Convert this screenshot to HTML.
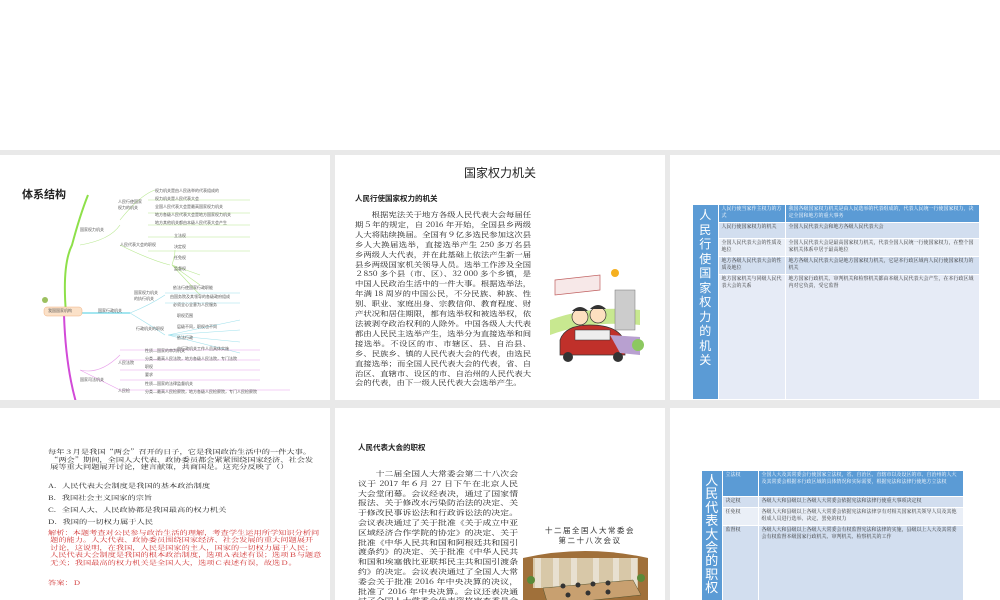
<!DOCTYPE html>
<html><head><meta charset="utf-8"><style>
*{margin:0;padding:0;box-sizing:border-box}
body{width:1000px;height:600px;background:#fff;position:relative;overflow:hidden;font-family:"Liberation Serif","Noto Serif CJK SC",serif;color:#222}
#bg{position:absolute;left:0;top:150px;width:1000px;height:450px;background:#e9e9e9}
.s{position:absolute;background:#fff;overflow:hidden}
.abs{position:absolute}
.sans{font-family:"Liberation Sans","Noto Sans CJK SC",sans-serif}
.sx{transform-origin:0 0;font-family:"Noto Serif CJK SC",serif}
.mm{font-family:"Liberation Sans","Noto Sans CJK SC",sans-serif;font-size:4px;color:#555;position:absolute;white-space:nowrap}
table{border-collapse:collapse;position:absolute;font-size:5px;line-height:6.5px;color:#333}
td{vertical-align:top;padding:2px 3px;border-right:1px solid #fff;border-bottom:1px solid #fff}
.v{background:#5b9bd5;color:#fff;font-family:"Liberation Sans","Noto Sans CJK SC",sans-serif;text-align:center}
</style></head><body>
<div id="bg"></div>

<!-- slide 1 mindmap -->
<div class="s" style="left:0;top:155px;width:330px;height:245px">
<div class="abs sans" style="left:22px;top:31px;font-size:11px;font-weight:bold">体系结构</div>
<svg class="abs" style="left:0;top:0" width="330" height="245">
<path d="M66 158 Q62 110 72 90 Q80 60 88 40" stroke="#8ee04a" stroke-width="2" fill="none"/>
<path d="M64 160 Q66 220 80 260" stroke="#d24ad8" stroke-width="2" fill="none"/>
<path d="M82 158 L130 158" stroke="#6cd6e8" stroke-width="1.2" fill="none"/>
<g stroke="#b8e890" fill="none" stroke-width=".6"><path d="M80 90 Q110 85 120 70"/><path d="M120 65 Q140 40 155 35M148 45 L250 45M148 58 L250 58M148 70 L250 70M148 82 L250 82M148 96 L250 96"/><path d="M120 90 Q150 105 170 110M172 110 Q175 100 175 95M172 110L200 120M172 110L200 130M172 110L200 140"/></g>
<g stroke="#9ee0ec" fill="none" stroke-width=".6"><path d="M130 158 Q150 150 165 140M130 158 Q150 170 165 180M165 138 L240 138M165 148 L240 148M168 180 L240 165M168 180L240 175M168 180L240 187M168 180L240 198"/></g>
<g stroke="#e8a0ea" fill="none" stroke-width=".6"><path d="M80 215 Q100 220 120 200M120 195 L260 195M120 205 L260 205M120 215 L260 215M120 225 L260 225M80 215 Q100 225 120 235M120 235L290 235"/></g>
<rect x="44" y="152" width="38" height="9" rx="3" fill="#fbe1c8" stroke="#f0b080" stroke-width=".5"/>
<circle cx="45" cy="145" r="3" fill="#9cc060"/>
</svg>
<div class="mm" style="left:48px;top:153px">我国国家机构</div>
<div class="mm" style="left:80px;top:72px">国家权力机关</div>
<div class="mm" style="left:118px;top:44px">人民行使国家<br>权力的机关</div>
<div class="mm" style="left:155px;top:33px">权力机关是由人民选举的代表组成的</div>
<div class="mm" style="left:155px;top:41px">权力机关是人民代表大会</div>
<div class="mm" style="left:155px;top:49px">全国人民代表大会是最高国家权力机关</div>
<div class="mm" style="left:155px;top:57px">地方各级人民代表大会是地方国家权力机关</div>
<div class="mm" style="left:155px;top:65px">地方其他机关都由本级人民代表大会产生</div>
<div class="mm" style="left:120px;top:87px">人民代表大会的职权</div>
<div class="mm" style="left:174px;top:78px">立法权<br><br>决定权<br><br>任免权<br><br>监督权</div>
<div class="mm" style="left:98px;top:153px">国家行政机关</div>
<div class="mm" style="left:134px;top:135px">国家权力机关<br>的执行机关</div>
<div class="mm" style="left:173px;top:130px">依法行使国家行政职能</div>
<div class="mm" style="left:170px;top:139px">由国务院及其领导的各级政府组成</div>
<div class="mm" style="left:173px;top:147px">必须全心全意为人民服务</div>
<div class="mm" style="left:136px;top:171px">行政机关的职权</div>
<div class="mm" style="left:177px;top:158px">职权范围<br><br>层级不同，职权也不同<br><br>依法行政<br><br>由行政机关工作人员具体实施</div>
<div class="mm" style="left:80px;top:222px">国家司法机关</div>
<div class="mm" style="left:118px;top:205px">人民法院</div>
<div class="mm" style="left:145px;top:193px">性质—国家的审判机关</div>
<div class="mm" style="left:145px;top:201px">分类—最高人民法院，地方各级人民法院，专门法院</div>
<div class="mm" style="left:145px;top:209px">职权</div>
<div class="mm" style="left:145px;top:217px">要求</div>
<div class="mm" style="left:118px;top:233px">人民检</div>
<div class="mm" style="left:145px;top:226px">性质—国家的法律监督机关</div>
<div class="mm" style="left:145px;top:234px">分类—最高人民检察院，地方各级人民检察院，专门人民检察院</div>
</div>

<!-- slide 2 -->
<div class="s" style="left:335px;top:155px;width:330px;height:245px">
<div class="abs sans" style="left:0;width:330px;top:9px;text-align:center;font-size:12px">国家权力机关</div>
<div class="abs sans" style="left:20px;top:38px;font-size:7.5px;font-weight:bold">人民行使国家权力的机关</div>
<div class="abs sx" style="left:20px;top:56px;width:148px;font-size:7px;line-height:9.9px;text-indent:14px;text-align:justify;transform:scaleX(1.19)">根据宪法关于地方各级人民代表大会每届任期５年的规定，自 2016 年开始，全国县乡两级人大将陆续换届。全国有９亿多选民参加这次县乡人大换届选举，直接选举产生 250 多万名县乡两级人大代表，并在此基础上依法产生新一届县乡两级国家机关领导人员。选举工作涉及全国２850 多个县（市、区）、32 000 多个乡镇，是中国人民政治生活中的一件大事。根据选举法，年满 18 周岁的中国公民，不分民族、种族、性别、职业、家庭出身、宗教信仰、教育程度、财产状况和居住期限，都有选举权和被选举权，依法被剥夺政治权利的人除外。中国各级人大代表都由人民民主选举产生，选举分为直接选举和间接选举。不设区的市、市辖区、县、自治县、乡、民族乡、镇的人民代表大会的代表，由选民直接选举；而全国人民代表大会的代表，省、自治区、直辖市、设区的市、自治州的人民代表大会的代表，由下一级人民代表大会选举产生。</div>
<svg class="abs" style="left:215px;top:110px" width="95" height="105">
<circle cx="65" cy="8" r="4" fill="#f5b020"/>
<path d="M5 15 L50 10 L50 25 L5 30Z" fill="#f7e8e8" stroke="#c06060" stroke-width=".7"/>
<path d="M0 55 Q40 40 90 45 L90 60 Q40 55 0 70Z" fill="#c8e890"/>
<rect x="65" y="25" width="20" height="40" fill="#ccc" stroke="#777" stroke-width=".5"/>
<circle cx="30" cy="52" r="8" fill="#fde0c0" stroke="#333" stroke-width=".7"/>
<circle cx="48" cy="50" r="8" fill="#fde0c0" stroke="#333" stroke-width=".7"/>
<path d="M22 46 Q30 38 38 46 M40 44 Q48 36 56 44" fill="#333"/>
<path d="M10 75 Q15 60 40 60 Q70 60 75 78 L75 90 L10 90Z" fill="#c0302a" stroke="#333" stroke-width=".7"/>
<rect x="25" y="65" width="35" height="10" fill="#eee" stroke="#333" stroke-width=".5"/>
<circle cx="18" cy="92" r="5" fill="#333"/><circle cx="68" cy="92" r="5" fill="#333"/>
<path d="M60 70 L90 72 L90 90 L70 88Z" fill="#b8a0d0"/>
<circle cx="88" cy="80" r="6" fill="#8cc860"/>
</svg>
</div>

<!-- slide 3 -->
<div class="s" style="left:670px;top:155px;width:330px;height:245px">
<table style="left:23px;top:50px;width:287px;height:195px">
<tr style="height:17px"><td class="v" rowspan="5" style="width:25px;font-size:12px;line-height:14.5px;padding-top:3px">人<br>民<br>行<br>使<br>国<br>家<br>权<br>力<br>的<br>机<br>关</td>
<td style="background:#5b9bd5;color:#fff;width:67px">人民行使当家作主权力的方式</td><td style="background:#5b9bd5;color:#fff">我国各级国家权力机关是由人民选举的代表组成的，代表人民统一行使国家权力，决定全国和地方的重大事务</td></tr>
<tr style="height:16px;background:#d2deef"><td>人民行使国家权力的机关</td><td>全国人民代表大会和地方各级人民代表大会</td></tr>
<tr style="height:18px;background:#eaeff7"><td>全国人民代表大会的性质及地位</td><td>全国人民代表大会是最高国家权力机关，代表全国人民统一行使国家权力，在整个国家机关体系中居于最高地位</td></tr>
<tr style="height:17px;background:#d2deef"><td>地方各级人民代表大会的性质及地位</td><td>地方各级人民代表大会是地方国家权力机关，它是本行政区域内人民行使国家权力的机关</td></tr>
<tr style="background:#e6ebf6"><td>地方国家机关与同级人民代表大会的关系</td><td>地方国家行政机关、审判机关和检察机关都由本级人民代表大会产生，在本行政区域内对它负责，受它监督</td></tr>
</table>
</div>

<!-- slide 4 -->
<div class="s" style="left:0;top:408px;width:330px;height:192px">
<div class="abs sx" style="left:48px;top:40px;font-size:6px;line-height:7.5px;white-space:nowrap;transform:scaleX(1.37)">每年３月是我国“两会”召开的日子，它是我国政治生活中的一件大事。<br>&nbsp;“两会”期间，全国人大代表、政协委员都会紧紧围绕国家经济、社会发<br>&nbsp;展等重大问题展开讨论，建言献策，共商国是。这充分反映了（）</div>
<div class="abs sx" style="left:48px;top:72px;font-size:6px;line-height:12px;white-space:nowrap;transform:scaleX(1.37)">A．人民代表大会制度是我国的基本政治制度<br>B．我国社会主义国家的宗旨<br>C．全国人大、人民政协都是我国最高的权力机关<br>D．我国的一切权力属于人民</div>
<div class="abs sx" style="left:48px;top:121px;font-size:6px;line-height:7.4px;color:#d03030;white-space:nowrap;transform:scaleX(1.37)">解析：本题考查对公民参与政治生活的理解，考查学生运用所学知识分析问<br>&nbsp;题的能力。人大代表、政协委员围绕国家经济、社会发展的重大问题展开<br>&nbsp;讨论，这说明，在我国，人民是国家的主人，国家的一切权力属于人民；<br>&nbsp;人民代表大会制度是我国的根本政治制度，选项Ａ表述有误；选项Ｂ与题意<br>&nbsp;无关；我国最高的权力机关是全国人大，选项Ｃ表述有误，故选Ｄ。</div>
<div class="abs sx" style="left:48px;top:170px;font-size:6px;color:#d03030;transform:scaleX(1.37)">答案：Ｄ</div>
</div>

<!-- slide 5 -->
<div class="s" style="left:335px;top:408px;width:330px;height:192px">
<div class="abs sans" style="left:23px;top:34px;font-size:7.5px;font-weight:bold">人民代表大会的职权</div>
<div class="abs sx" style="left:23px;top:62px;width:127px;font-size:7px;line-height:9.8px;text-indent:14px;text-align:justify;transform:scaleX(1.26)">十二届全国人大常委会第二十八次会议于 2017 年６月 27 日下午在北京人民大会堂闭幕。会议经表决，通过了国家情报法、关于修改水污染防治法的决定、关于修改民事诉讼法和行政诉讼法的决定。会议表决通过了关于批准《关于成立中亚区域经济合作学院的协定》的决定、关于批准《中华人民共和国和阿根廷共和国引渡条约》的决定、关于批准《中华人民共和国和埃塞俄比亚联邦民主共和国引渡条约》的决定。会议表决通过了全国人大常委会关于批准 2016 年中央决算的决议，批准了 2016 年中央决算。会议还表决通过了全国人大常委会代表资格审查委员会关于个别代表的代表资格的报告。</div>
<div class="abs sans" style="left:190px;top:118px;width:130px;text-align:center;font-size:7.5px;line-height:10px;letter-spacing:1.5px;color:#333">十二届全国人大常委会<br>第二十八次会议</div>
<svg class="abs" style="left:188px;top:142px" width="125" height="55">
<path d="M0 8 Q62 -6 125 8 L125 55 L0 55Z" fill="#a0703a"/>
<rect x="10" y="8" width="105" height="30" fill="#d8c8a8"/>
<g fill="#e8e0d0"><rect x="12" y="8" width="6" height="30"/><rect x="30" y="8" width="6" height="30"/><rect x="48" y="8" width="6" height="30"/><rect x="70" y="8" width="6" height="30"/><rect x="90" y="8" width="6" height="30"/><rect x="108" y="8" width="6" height="30"/></g>
<path d="M20 38 L110 30 L118 45 L25 55Z" fill="#c8a070" stroke="#553" stroke-width=".5"/>
<g fill="#333"><circle cx="40" cy="36" r="2.5"/><circle cx="55" cy="35" r="2.5"/><circle cx="70" cy="34" r="2.5"/><circle cx="85" cy="33" r="2.5"/><circle cx="45" cy="45" r="2.5"/><circle cx="65" cy="43" r="2.5"/><circle cx="85" cy="42" r="2.5"/></g>
<circle cx="8" cy="30" r="4" fill="#5a8a3a"/><circle cx="118" cy="28" r="4" fill="#5a8a3a"/>
</svg>
</div>

<!-- slide 6 -->
<div class="s" style="left:670px;top:408px;width:330px;height:192px">
<table style="left:32px;top:63px;width:262px;height:140px">
<tr style="height:25px"><td class="v" rowspan="4" style="width:20px;font-size:13px;line-height:13.4px;padding-top:3px">人<br>民<br>代<br>表<br>大<br>会<br>的<br>职<br>权</td>
<td style="background:#5b9bd5;color:#fff;width:36px">立法权</td><td style="background:#5b9bd5;color:#fff">全国人大及其常委会行使国家立法权，省、自治区、直辖市以及设区的市、自治州的人大及其常委会根据本行政区域的具体情况和实际需要，根据宪法和法律行使地方立法权</td></tr>
<tr style="height:10px;background:#d2deef"><td>决定权</td><td>各级人大和县级以上各级人大常委会依据宪法和法律行使重大事项决定权</td></tr>
<tr style="height:17px;background:#eaeff7"><td>任免权</td><td>各级人大和县级以上各级人大常委会依据宪法和法律享有对相关国家机关领导人员及其他组成人员进行选举、决定、罢免的权力</td></tr>
<tr style="background:#d2deef"><td>监督权</td><td>各级人大和县级以上各级人大常委会有权监督宪法和法律的实施，县级以上人大及其常委会有权监督本级国家行政机关、审判机关、检察机关的工作</td></tr>
</table>
</div>
</body></html>
